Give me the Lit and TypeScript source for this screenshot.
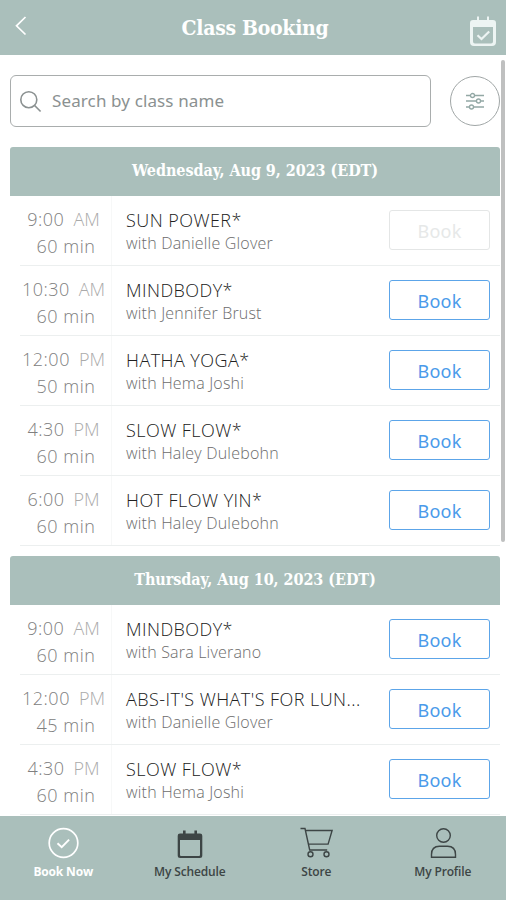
import { LitElement, html, css, svg } from "lit";
import { customElement, property } from "lit/decorators.js";

interface Session {
  time: string;
  period: string;
  length: string;
  title: string;
  teacher: string;
  closed?: boolean;
}

interface Day {
  label: string;
  sessions: Session[];
}

const days: Day[] = [
  {
    label: "Wednesday, Aug 9, 2023 (EDT)",
    sessions: [
      { time: "9:00", period: "AM", length: "60 min", title: "SUN POWER*", teacher: "Danielle Glover", closed: true },
      { time: "10:30", period: "AM", length: "60 min", title: "MINDBODY*", teacher: "Jennifer Brust" },
      { time: "12:00", period: "PM", length: "50 min", title: "HATHA YOGA*", teacher: "Hema Joshi" },
      { time: "4:30", period: "PM", length: "60 min", title: "SLOW FLOW*", teacher: "Haley Dulebohn" },
      { time: "6:00", period: "PM", length: "60 min", title: "HOT FLOW YIN*", teacher: "Haley Dulebohn" },
    ],
  },
  {
    label: "Thursday, Aug 10, 2023 (EDT)",
    sessions: [
      { time: "9:00", period: "AM", length: "60 min", title: "MINDBODY*", teacher: "Sara Liverano" },
      { time: "12:00", period: "PM", length: "45 min", title: "ABS-IT'S WHAT'S FOR LUN...", teacher: "Danielle Glover" },
      { time: "4:30", period: "PM", length: "60 min", title: "SLOW FLOW*", teacher: "Hema Joshi" },
    ],
  },
];

const icons = {
  book: svg`<circle cx="16.500" cy="16" r="14.3" fill="none" stroke="currentColor" stroke-width="1.7"/><path d="M10.500 16.200l4.200 4 7.400-7.600" fill="none" stroke="currentColor" stroke-width="1.9"/>`,
  schedule: svg`<path fill="currentColor" fill-rule="evenodd" d="M6 6.500h3v-3h2.600v3h8.800v-3H23v3h3q2.300 0 2.300 2.300V28.500q0 2.500-2.500 2.500H6.200q-2.500 0-2.500-2.500V8.800Q3.700 6.500 6 6.500zM6 13v15q0 1 1 1h18q1 0 1-1V13z"/>`,
  store: svg`<g fill="none" stroke="currentColor" stroke-width="1.4"><path d="M.500 1.500H5L9.700 23h17.500M6.100 3.500h26l-4 13.600H8.700"/><circle cx="10.500" cy="27.300" r="2.500"/><circle cx="26.500" cy="27.300" r="2.500"/></g>`,
  profile: svg`<g fill="none" stroke="currentColor" stroke-width="1.4"><circle cx="16.500" cy="8.500" r="6.800"/><path d="M4.500 30.300V27.500Q4.500 19.300 12.500 19.300h8q8 0 8 8.200v2.800z"/></g>`,
};

const tabs = [
  { label: "Book Now", icon: icons.book, active: true },
  { label: "My Schedule", icon: icons.schedule, active: false },
  { label: "Store", icon: icons.store, active: false },
  { label: "My Profile", icon: icons.profile, active: false },
];

@customElement("session-row")
class SessionRow extends LitElement {
  @property({ attribute: false }) session!: Session;

  static styles = css`
    :host { display: block; height: 70px; }
    .row { display: flex; height: 70px; box-sizing: border-box; margin-left: 10px; border-bottom: 1px solid #ecefef; }
    .when { width: 92px; box-sizing: border-box; border-right: 1px solid #f7f8f8; display: flex; flex-direction: column; align-items: center; padding: 10px 0 0; color: #808080; font-size: 18px; font-weight: 350; line-height: 26.500px; letter-spacing: .5px; white-space: nowrap; }
    .clock { display: flex; gap: 9px; margin-left: -4px; }
    .length { margin-left: 1px; }
    .period { font-weight: 300; color: #aaa; font-size: 18px; letter-spacing: 0; }
    .what { flex: 1; padding: 12px 0 0 14px; white-space: nowrap; }
    .title { color: #202020; font-size: 18px; font-weight: 350; line-height: 25px; letter-spacing: .45px; }
    .teacher { color: #6c6c6c; font-size: 16px; font-weight: 350; line-height: 21px; letter-spacing: .2px; }
    .book { width: 101px; height: 40px; box-sizing: border-box; margin: 14px 10px 0 0; padding: 1px 0 0; border: 1px solid #5ca5e9; border-radius: 3px; background: #fff; color: #4a9aea; font: 400 18px/32px "Noto Sans", sans-serif; letter-spacing: .2px; }
    .closed { color: #e6e8e8; border-color: #e4e6e6; }
  `;

  render() {
    const s = this.session;
    return html`<div class="row">
      <div class="when">
        <div class="clock"><span>${s.time}</span><span class="period">${s.period}</span></div>
        <div class="length">${s.length}</div>
      </div>
      <div class="what">
        <div class="title">${s.title}</div>
        <div class="teacher">with ${s.teacher}</div>
      </div>
      <button class="book ${s.closed ? "closed" : ""}">Book</button>
    </div>`;
  }
}

@customElement("app-root")
class AppRoot extends LitElement {
  static styles = css`
    :host { display: flex; flex-direction: column; position: relative; height: 900px; overflow: hidden; background: #fff; font-family: "Open Sans", "Noto Sans", sans-serif; }
    .top { flex: none; height: 55px; box-sizing: border-box; background: #aabfbb; color: #fff; display: grid; grid-template-columns: 60px 1fr 60px; align-items: start; }
    .back { width: 14px; height: 22px; margin: 15px 0 0 14px; }
    .heading { margin: 12px 0 0 4px; text-align: center; font: 700 21px/32px "DejaVu Serif Condensed", "DejaVu Serif", serif; font-stretch: condensed; letter-spacing: -.3px; white-space: nowrap; }
    .calendar { width: 28px; height: 32px; justify-self: end; margin: 15px 9px 0 0; color: #edf4f3; }
    .tools { flex: none; display: flex; gap: 19px; padding: 20px 0 0 10px; height: 92px; box-sizing: border-box; }
    .search { width: 421px; height: 52px; box-sizing: border-box; border: 1px solid #a9adad; border-radius: 6px; display: flex; align-items: center; padding-left: 9px; gap: 9px; color: #8b9191; }
    .search svg { width: 23px; height: 23px; }
    .query { font: 400 17px/24px "Noto Sans", sans-serif; letter-spacing: .12px; }
    .filter { width: 50px; height: 50px; box-sizing: border-box; border: 1px solid #a0a6a6; border-radius: 50%; display: grid; place-items: center; margin-top: 1px; color: #93a8a5; }
    .filter svg { width: 20px; height: 18px; }
    .list { flex: 1; min-height: 0; overflow: hidden; padding: 0 6px 0 10px; }
    .day { margin-bottom: 10px; }
    .date { height: 49px; box-sizing: border-box; background: #aabfbb; color: #fff; border-radius: 3px 3px 0 0; text-align: center; font: 700 16px/48px "DejaVu Serif Condensed", "DejaVu Serif", serif; font-stretch: condensed; letter-spacing: -.06px; white-space: nowrap; }
    .nav { flex: none; height: 84px; background: #aabfbb; display: grid; grid-template-columns: repeat(4, 1fr); color: #3d4545; }
    .tab { display: flex; flex-direction: column; align-items: center; padding-top: 11px; font: 600 12px/17px "Open Sans", sans-serif; letter-spacing: -.15px; }
    .tab svg { width: 32px; height: 32px; margin-bottom: 4px; overflow: visible; }
    .active { color: #fff; font-weight: 700; }
    .scroll { position: absolute; right: 1px; top: 60px; width: 4px; height: 482px; background: #bfc0c0; border-radius: 2px; }
  `;

  render() {
    return html`
      <header class="top">
        <svg class="back" viewBox="0 0 14 22"><path d="M11.500 2L2.500 10.800l9 8.700" fill="none" stroke="#fff" stroke-width="1.700"/></svg>
        <div class="heading">Class Booking</div>
        <svg class="calendar" viewBox="0 0 28 32"><path fill="currentColor" fill-rule="evenodd" d="M4 5h4V1.500h2V5h8V1.500h2V5h4q3 0 3 3v19q0 4-4 4H5q-4 0-4-4V8q0-3 3-3zM4 12v14.500q0 2 2 2h16q2 0 2-2V12z"/><path d="M8.500 20.300l4 3.700 7.700-7.500" fill="none" stroke="currentColor" stroke-width="2.200"/></svg>
      </header>
      <div class="tools">
        <div class="search">
          <svg viewBox="0 0 23 23"><g fill="none" stroke="currentColor" stroke-width="1.600"><circle cx="8.800" cy="9.700" r="8"/><path d="M14.600 15.500l6 6"/></g></svg>
          <span class="query">Search by class name</span>
        </div>
        <div class="filter">
          <svg viewBox="0 0 20 18"><g fill="#fff" stroke="currentColor" stroke-width="1.300"><path d="M1 3.500h18M1 9h18M1 15h18"/><circle cx="7.500" cy="3.500" r="2"/><circle cx="13.500" cy="9" r="2"/><circle cx="6.500" cy="15" r="2"/></g></svg>
        </div>
      </div>
      <main class="list">
        ${days.map((d) => html`<section class="day">
          <div class="date">${d.label}</div>
          ${d.sessions.map((s) => html`<session-row .session=${s}></session-row>`)}
        </section>`)}
      </main>
      <nav class="nav">
        ${tabs.map((t) => html`<div class="tab ${t.active ? "active" : ""}"><svg viewBox="0 0 32 32">${t.icon}</svg><span>${t.label}</span></div>`)}
      </nav>
      <div class="scroll"></div>
    `;
  }
}
